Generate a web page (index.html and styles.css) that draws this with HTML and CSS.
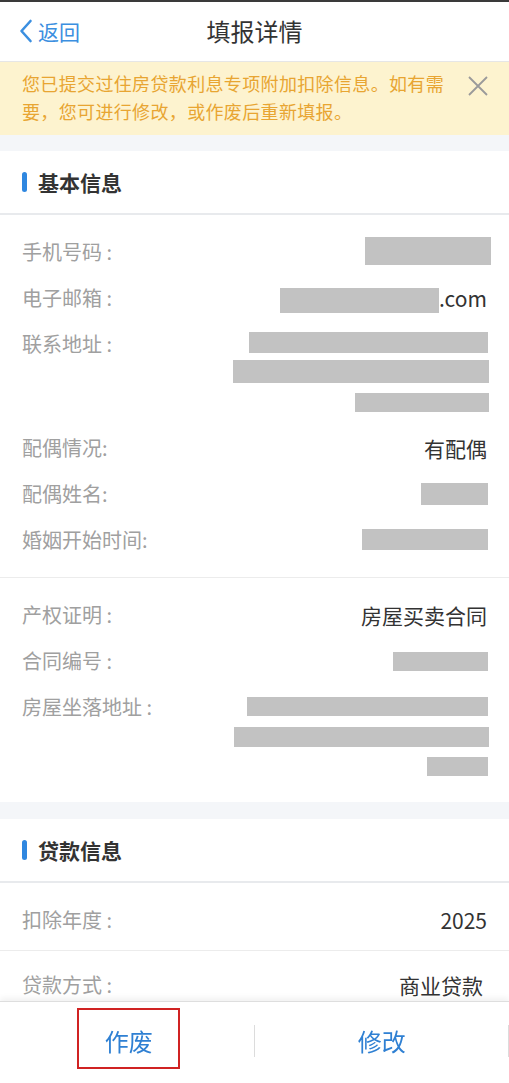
FILE: index.html
```html
<!DOCTYPE html>
<html lang="zh-CN">
<head>
<meta charset="utf-8">
<title>填报详情</title>
<link rel="stylesheet" href="styles.css">
</head>
<body>
<div class="page">
  <header class="nav">
    <div class="back">
      <svg class="chev" width="14" height="24" viewBox="0 0 14 24"><path d="M11.5 2 L2.5 12 L11.5 22" fill="none" stroke="#3b8fe0" stroke-width="2.6" stroke-linecap="round" stroke-linejoin="round"/></svg>
      <span>返回</span>
    </div>
    <div class="title">填报详情</div>
  </header>

  <div class="banner">
    <p class="banner-text">您已提交过住房贷款利息专项附加扣除信息。如有需要，您可进行修改，或作废后重新填报。</p>
    <svg class="close" width="20" height="20" viewBox="0 0 20 20"><path d="M1 1 L19 19 M19 1 L1 19" stroke="#9a9a9a" stroke-width="1.8" fill="none"/></svg>
  </div>

  <div class="gap"></div>

  <section class="card">
    <div class="card-head"><span class="bar"></span><h2>基本信息</h2></div>
    <div class="group">
      <div class="row"><span class="label">手机号码 :</span><span class="mask m-phone"></span></div>
      <div class="row"><span class="label">电子邮箱 :</span><span class="val email"><span class="mask m-email"></span>.com</span></div>
      <div class="row row-addr"><span class="label">联系地址 :</span>
        <span class="stack s-addr"><span class="mask a1"></span><span class="mask a2"></span><span class="mask a3"></span></span>
      </div>
      <div class="row"><span class="label">配偶情况:</span><span class="val">有配偶</span></div>
      <div class="row"><span class="label">配偶姓名:</span><span class="mask m-name"></span></div>
      <div class="row"><span class="label">婚姻开始时间:</span><span class="mask m-date"></span></div>
    </div>
    <div class="group group-line">
      <div class="row"><span class="label">产权证明 :</span><span class="val">房屋买卖合同</span></div>
      <div class="row"><span class="label">合同编号 :</span><span class="mask m-contract"></span></div>
      <div class="row row-house"><span class="label">房屋坐落地址 :</span>
        <span class="stack s-house"><span class="mask h1"></span><span class="mask h2"></span><span class="mask h3"></span></span>
      </div>
    </div>
  </section>

  <div class="gap gap2"></div>

  <section class="card">
    <div class="card-head"><span class="bar"></span><h2>贷款信息</h2></div>
    <div class="lrow"><span class="label">扣除年度 :</span><span class="val">2025</span></div>
    <div class="lrow lrow2"><span class="label">贷款方式 :</span><span class="val val-in">商业贷款</span></div>
  </section>
</div>

<footer class="footer">
  <div class="btn"><span class="mark">作废</span></div>
  <div class="btn">修改</div>
</footer>
</body>
</html>
```

FILE: styles.css
```css
* { box-sizing: border-box; }
html, body { margin: 0; padding: 0; }
body {
  width: 509px;
  height: 1083px;
  overflow: hidden;
  background: #ffffff;
  font-family: "Noto Sans CJK SC", "Noto Sans", sans-serif;
  color: #333;
}
.page { width: 509px; }

.nav {
  position: relative;
  height: 62px;
  border-top: 2px solid #3a3a3a;
  border-bottom: 1px solid #e6e6e6;
  display: flex;
  align-items: center;
  justify-content: center;
}
.back {
  position: absolute;
  left: 19px;
  top: 17px;
  display: flex;
  align-items: center;
  gap: 5px;
  color: #3b8fe0;
  font-size: 21px;
  line-height: 24px;
}
.chev { display: block; }
.title {
  font-size: 24px;
  color: #333;
  margin-top: -2px;
}

.banner {
  background: #fdf3cf;
  display: flex;
  justify-content: space-between;
  align-items: flex-start;
  padding: 7px 20px 10px 22px;
}
.banner-text {
  margin: 0;
  width: 432px;
  font-size: 18px;
  letter-spacing: 0.35px;
  line-height: 28px;
  color: #e8a532;
}
.close { margin-top: 7px; margin-right: 1px; }

.gap { height: 16px; background: #f4f6f9; }
.gap2 { height: 17px; }

.card { background: #fff; }
.card-head {
  height: 64px;
  border-bottom: 2px solid #e8eaed;
  display: flex;
  align-items: center;
  padding-left: 22px;
  gap: 11px;
}
.bar {
  width: 5px;
  height: 20px;
  border-radius: 3px;
  background: #2f87e0;
}
.card-head h2 {
  margin: 0;
  font-size: 21px;
  font-weight: 700;
  color: #333;
}

.group { padding: 14px 0; }
.group-line { border-top: 1px solid #ececec; }

.row {
  display: flex;
  justify-content: space-between;
  align-items: center;
  height: 46px;
  padding: 0 22px;
}
.label {
  font-size: 20px;
  color: #a0a0a0;
  line-height: 46px;
  white-space: pre;
}
.val {
  font-size: 21px;
  color: #333;
  line-height: 46px;
}
.email { display: flex; align-items: center; }

.mask { display: block; background: #c2c2c2; }
.m-phone { width: 126px; height: 28px; margin-right: -4px; margin-top: -2px; }
.m-email { width: 159px; height: 25px; margin-top: 4px; }
.m-name { width: 67px; height: 22px; margin-right: -1px; }
.m-date { width: 126px; height: 21px; margin-right: -1px; margin-top: -2px; }
.m-contract { width: 95px; height: 19px; margin-right: -1px; margin-top: 1px; }

.row-addr, .row-house { align-items: flex-start; height: auto; }
.stack {
  display: flex;
  flex-direction: column;
  align-items: flex-end;
}
.row-addr { height: 104px; }
.s-addr { padding-top: 11px; margin-right: -2px; }
.a1 { width: 239px; height: 21px; margin-right: 1px; }
.a2 { width: 256px; height: 23px; margin-top: 7px; }
.a3 { width: 134px; height: 19px; margin-top: 10px; }

.row-house { height: 104px; }
.s-house { padding-top: 13px; margin-right: -2px; }
.h1 { width: 241px; height: 19px; margin-right: 1px; }
.h2 { width: 255px; height: 20px; margin-top: 11px; }
.h3 { width: 61px; height: 19px; margin-top: 10px; margin-right: 1px; }

.lrow {
  height: 68px;
  padding: 6px 22px 0;
  display: flex;
  justify-content: space-between;
  align-items: center;
  border-bottom: 1px solid #ececec;
}
.lrow2 { padding-top: 0; border-bottom: none; }
.val-in { margin-right: 4px; }

.footer {
  position: fixed;
  left: 0;
  bottom: 0;
  width: 509px;
  height: 82px;
  background: #fff;
  border-top: 1px solid #dedede;
  box-shadow: 0 -3px 6px rgba(0,0,0,0.06);
  display: flex;
}
.btn {
  position: relative;
  flex: 1;
  display: flex;
  align-items: center;
  justify-content: center;
  font-size: 24px;
  color: #2f80d3;
  padding-bottom: 4px;
}
.btn::after {
  content: "";
  position: absolute;
  right: 0;
  top: 23px;
  height: 32px;
  width: 1px;
  background: #dcdcdc;
}
.mark {
  display: flex;
  align-items: center;
  justify-content: center;
  width: 103px;
  height: 61px;
  border: 2px solid #d02323;
  margin-left: 3px;
  margin-top: -5px;
  padding-top: 4px;
}
```
